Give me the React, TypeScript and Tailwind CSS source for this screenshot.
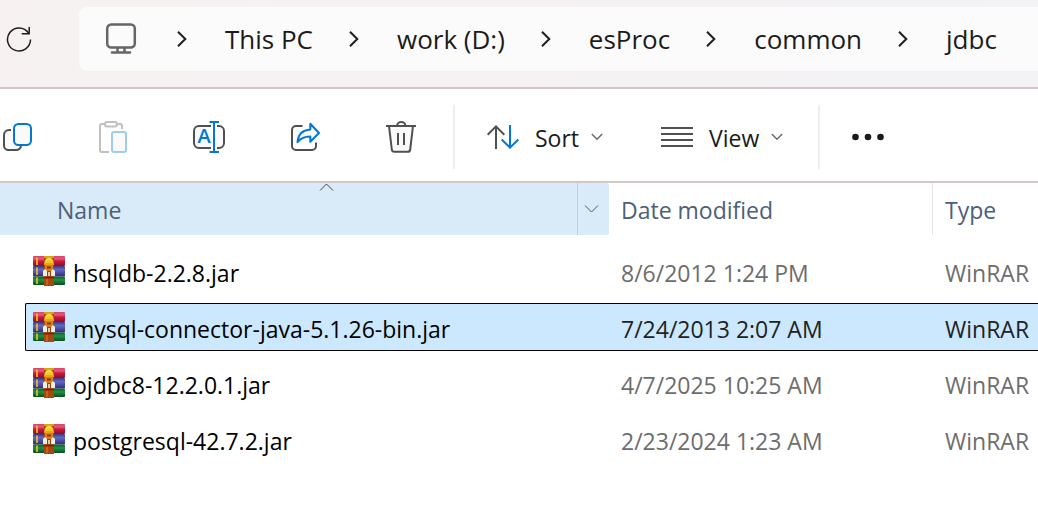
import { Fragment, useState } from "react";
import type { ReactNode } from "react";

interface FileEntry {
  name: string;
  modified: string;
  type: string;
}

const path = ["This PC", "work (D:)", "esProc", "common", "jdbc"];

const files: FileEntry[] = [
  { name: "hsqldb-2.2.8.jar", modified: "8/6/2012 1:24 PM", type: "WinRAR" },
  { name: "mysql-connector-java-5.1.26-bin.jar", modified: "7/24/2013 2:07 AM", type: "WinRAR" },
  { name: "ojdbc8-12.2.0.1.jar", modified: "4/7/2025 10:25 AM", type: "WinRAR" },
  { name: "postgresql-42.7.2.jar", modified: "2/23/2024 1:23 AM", type: "WinRAR" },
];

function Icon({ children }: { children: ReactNode }) {
  return (
    <svg className="h-8 w-8 shrink-0 overflow-visible" viewBox="0 0 32 32" fill="none" stroke="#505050" strokeWidth="2" aria-hidden="true">
      {children}
    </svg>
  );
}

function RefreshIcon() {
  return (
    <svg className="h-7 w-7" viewBox="0 0 28 28" fill="none" stroke="#1c1c1c" strokeWidth="1.5" aria-hidden="true">
      <path d="M25.500 14.500A11.500 11.500 0 1 1 23.500 8" />
      <path d="M24.200 2v6.800h-7.500" />
    </svg>
  );
}

function MonitorIcon() {
  return (
    <svg className="h-8 w-8" viewBox="0 0 32 32" fill="none" stroke="#666" strokeWidth="2.500" aria-hidden="true">
      <rect x="2.200" y="1.500" width="27.600" height="23" rx="4" />
      <path d="M12.500 25v4M19.500 25v4M7 29.500h18" strokeLinecap="round" />
    </svg>
  );
}

function ChevronRight() {
  return (
    <svg className="h-4 w-2.5 shrink-0" viewBox="0 0 10 16" fill="none" stroke="#1f1f1f" strokeWidth="2" aria-hidden="true">
      <path d="M1 .8 8.300 8 1 15.200" />
    </svg>
  );
}

function ChevronDown() {
  return (
    <svg className="h-2 w-3 shrink-0" viewBox="0 0 12 8" fill="none" stroke="#6b6b6b" strokeWidth="1.500" aria-hidden="true">
      <path d="m.8 1 5.200 5.200L11.200 1" />
    </svg>
  );
}

function CopyIcon() {
  return (
    <Icon>
      <path d="M10 9H8a5 5 0 0 0-5 5v10.500a4.500 4.500 0 0 0 4.500 4.500H15c2.500 0 4.500-1.500 5-4" fill="#fafafa" />
      <rect x="13" y="3" width="17" height="21" rx="4.500" fill="#fafafa" stroke="#0078d4" />
    </Icon>
  );
}

function PasteIcon() {
  return (
    <Icon>
      <path d="M8 3H5a2 2 0 0 0-2 2v24a2 2 0 0 0 2 2h7M20 3h3a2 2 0 0 1 2 2v3" stroke="#c0c0c0" />
      <rect x="8" y="1" width="12" height="4.500" rx="2.250" stroke="#c0c0c0" />
      <rect x="15" y="11" width="14" height="20" rx="2" fill="#fafafa" stroke="#9fcbf0" />
    </Icon>
  );
}

function RenameIcon() {
  return (
    <Icon>
      <path d="M18 5H6a5 5 0 0 0-5 5v12a5 5 0 0 0 5 5h12M24 5h2a5 5 0 0 1 5 5v12a5 5 0 0 1-5 5h-2" fill="#fafafa" />
      <path d="M21 1v30M16.500 1h9.500M16.500 31h9.500" stroke="#0078d4" />
      <text x="11" y="22" textAnchor="middle" fill="#0078d4" stroke="none" className="text-[20px] font-semibold">
        A
      </text>
    </Icon>
  );
}

function ShareIcon() {
  return (
    <Icon>
      <path d="M13.500 5H7a4 4 0 0 0-4 4v16a4 4 0 0 0 4 4h16a4 4 0 0 0 4-4v-3.500" />
      <path d="M21.300 2.800 30 12l-8.700 8.800v-5.300c-6 0-9.500 1.500-12.800 5.700.6-8 5-12.200 12.800-12.700z" fill="#fafafa" stroke="#0078d4" strokeLinejoin="round" />
    </Icon>
  );
}

function TrashIcon() {
  return (
    <Icon>
      <path d="m4 5 2.800 23.500c.2 1.500 1 2.300 2.500 2.300h13.400c1.500 0 2.300-.8 2.500-2.300L28 5" fill="#fafafa" />
      <path d="M1 5h30M12 5c0-5.300 8.500-5.300 8.500 0M13 12v12M19 12v12" />
    </Icon>
  );
}

function SortIcon() {
  return (
    <Icon>
      <path d="M9 28V5M.7 13.700 9 5.300l8.300 8.400" />
      <path d="M23 4v23M14.700 18.500 23 26.700l8.300-8.200" stroke="#0078d4" />
    </Icon>
  );
}

function ViewIcon() {
  return (
    <Icon>
      <path d="M0 7h32M0 13h32M0 19h32M0 25h32" />
    </Icon>
  );
}

function ArchiveIcon() {
  return (
    <svg className="h-[30px] w-8 shrink-0" viewBox="0 0 32 30" aria-hidden="true">
      <defs>
        <linearGradient id="book-red" x2="0" y2="1">
          <stop offset="0" stopColor="#d84468" />
          <stop offset=".3" stopColor="#e4587c" />
          <stop offset=".5" stopColor="#c81c3c" />
          <stop offset="1" stopColor="#8c1020" />
        </linearGradient>
        <linearGradient id="book-blue" x2="0" y2="1">
          <stop offset="0" stopColor="#38388c" />
          <stop offset=".35" stopColor="#6468c0" />
          <stop offset="1" stopColor="#2c2c78" />
        </linearGradient>
        <linearGradient id="book-green" x2="0" y2="1">
          <stop offset="0" stopColor="#145c28" />
          <stop offset=".4" stopColor="#1c9444" />
          <stop offset="1" stopColor="#0c4c20" />
        </linearGradient>
      </defs>
      <rect width="32" height="10" rx="1" fill="url(#book-red)" />
      <rect y="10" width="32" height="10.500" rx="1" fill="url(#book-blue)" />
      <rect y="20.500" width="32" height="8.500" rx="1" fill="url(#book-green)" />
      <path d="M4 1.500v7.500M4 11.500v7.500M4 21.500v6.500" stroke="#f4c41c" strokeWidth="1.600" />
      <path d="M11 0h10v30H11z" fill="#a8480c" />
      <path d="M11 0h10v2H11z" fill="#d8a018" />
      <path d="M11.500 7c0-7.500 9-7.500 9 0z" fill="#f8c828" />
      <path d="M13.500 4.500c1-2 4-2 5 0" stroke="#fff08c" fill="none" />
      <path d="M11 7h10v2H11z" fill="#f09c1c" />
      <path d="M12 9h8v6l-1.500 2h-5L12 15z" fill="#e07c18" />
      <path d="M14 10.500h4v2h-4z" fill="#783808" />
      <path d="m12 13-2 2v5h4v-5zM20 13l2 2v5h-4v-5z" fill="#f2eeea" />
      <path d="M14 15h4v6h-4z" fill="#94400c" />
      <path d="M15.200 16h1.600v4h-1.600z" fill="#f2eeea" />
      <path d="M11 21h10v1.500H11z" fill="#742c08" />
      <path d="M13 23h2v6h-2z" fill="#c46420" />
    </svg>
  );
}

function ToolButton({ label, children }: { label: string; children: ReactNode }) {
  return (
    <button type="button" aria-label={label} className="shrink-0">
      {children}
    </button>
  );
}

export default function App() {
  const [selected, setSelected] = useState(1);

  return (
    <div className="min-h-screen overflow-hidden bg-white font-['Open_Sans','Noto_Sans',sans-serif] text-[#1b1b1b]">
      <header className="flex border-b-2 border-[#d3c4cb] bg-linear-to-r from-[#f7f1f1] to-[#f3f2f5] pt-[7px] pb-4">
        <button type="button" aria-label="Refresh" className="ml-[5px] shrink-0">
          <RefreshIcon />
        </button>
        <nav aria-label="Address" className="ml-[46px] flex h-16 min-w-0 flex-1 items-center rounded-l-lg bg-[#fcfbfc] pl-[26px] text-[26px] whitespace-nowrap">
          <MonitorIcon />
          {path.map((part, i) => (
            <Fragment key={part}>
              <span className={i === 0 ? "ml-10" : "ml-9"}>
                <ChevronRight />
              </span>
              <a href="#" className="ml-[38px]">
                {part}
              </a>
            </Fragment>
          ))}
        </nav>
      </header>

      <div role="toolbar" aria-label="Commands" className="flex h-[94px] items-center border-b-2 border-[#d6c5c9] pt-1 pl-px text-[23px]">
        <div className="flex gap-16">
          <ToolButton label="Copy">
            <CopyIcon />
          </ToolButton>
          <ToolButton label="Paste">
            <PasteIcon />
          </ToolButton>
          <ToolButton label="Rename">
            <RenameIcon />
          </ToolButton>
          <ToolButton label="Share">
            <ShareIcon />
          </ToolButton>
          <ToolButton label="Delete">
            <TrashIcon />
          </ToolButton>
        </div>
        <div className="ml-9 h-16 w-0.5 bg-[#eeeeee]" />
        <button type="button" className="ml-8 flex items-center">
          <SortIcon />
          <span className="mr-3 ml-4 pt-0.5">Sort</span>
          <ChevronDown />
        </button>
        <button type="button" className="ml-[58px] flex items-center">
          <ViewIcon />
          <span className="mr-3 ml-4 pt-0.5">View</span>
          <ChevronDown />
        </button>
        <div className="ml-[35px] h-16 w-0.5 bg-[#eeeeee]" />
        <button type="button" aria-label="More" className="ml-8">
          <svg className="h-2 w-8" viewBox="0 0 32 8" fill="#1b1b1b" aria-hidden="true">
            <circle cx="3.500" cy="4" r="3.300" />
            <circle cx="16" cy="4" r="3.300" />
            <circle cx="28.500" cy="4" r="3.300" />
          </svg>
        </button>
      </div>

      <table className="w-full table-fixed border-separate border-spacing-0 text-left text-[23px] whitespace-nowrap">
        <colgroup>
          <col className="w-[609px]" />
          <col className="w-[324px]" />
          <col />
        </colgroup>
        <thead className="text-[#4c607a]">
          <tr>
            <th className="p-0 pb-2 font-normal" aria-sort="ascending">
              <div className="relative flex h-[52px] items-center rounded-r-xs bg-[#d9ebf9] pl-[57px]">
                <span className="pt-0.5">Name</span>
                <svg className="absolute top-0 left-[319px] h-2 w-[15px]" viewBox="0 0 15 8" fill="none" stroke="#444" aria-hidden="true">
                  <path d="m1 7.500 6.500-6.500L14 7.500" />
                </svg>
                <button type="button" aria-label="Filter by name" className="ml-auto flex h-[52px] w-8 items-center justify-center border-l border-[#bacfdf] pr-1">
                  <svg className="h-2 w-[15px]" viewBox="0 0 15 8" fill="none" stroke="#555" aria-hidden="true">
                    <path d="m1 .5 6.500 6.500L14 .5" />
                  </svg>
                </button>
              </div>
            </th>
            <th className="p-0 pb-2 font-normal">
              <div className="flex h-[52px] items-center border-r border-[#e5e5e5] pt-0.5 pl-3">Date modified</div>
            </th>
            <th className="p-0 pb-2 font-normal">
              <div className="flex h-[52px] items-center pt-0.5 pl-3">Type</div>
            </th>
          </tr>
        </thead>
        <tbody>
          {files.map((file, i) => {
            const active = i === selected;
            const box = active ? "border-black bg-[#cce8ff]" : "border-transparent";
            const muted = active ? "text-[#222]" : "text-[#6d6d6d]";
            return (
              <tr key={file.name} aria-selected={active} onClick={() => setSelected(i)}>
                <td className="py-1 pr-0 pl-[25px]">
                  <div className={`flex h-12 items-center gap-2 rounded-l-xs border-y border-l pl-[7px] text-black ${box}`}>
                    <ArchiveIcon />
                    <span className="pt-1">{file.name}</span>
                  </div>
                </td>
                <td className="px-0 py-1">
                  <div className={`flex h-12 items-center border-y pt-1 pl-3 ${box} ${muted}`}>{file.modified}</div>
                </td>
                <td className="px-0 py-1">
                  <div className={`flex h-12 items-center border-y pt-1 pl-3 ${box} ${muted}`}>{file.type}</div>
                </td>
              </tr>
            );
          })}
        </tbody>
      </table>
    </div>
  );
}
